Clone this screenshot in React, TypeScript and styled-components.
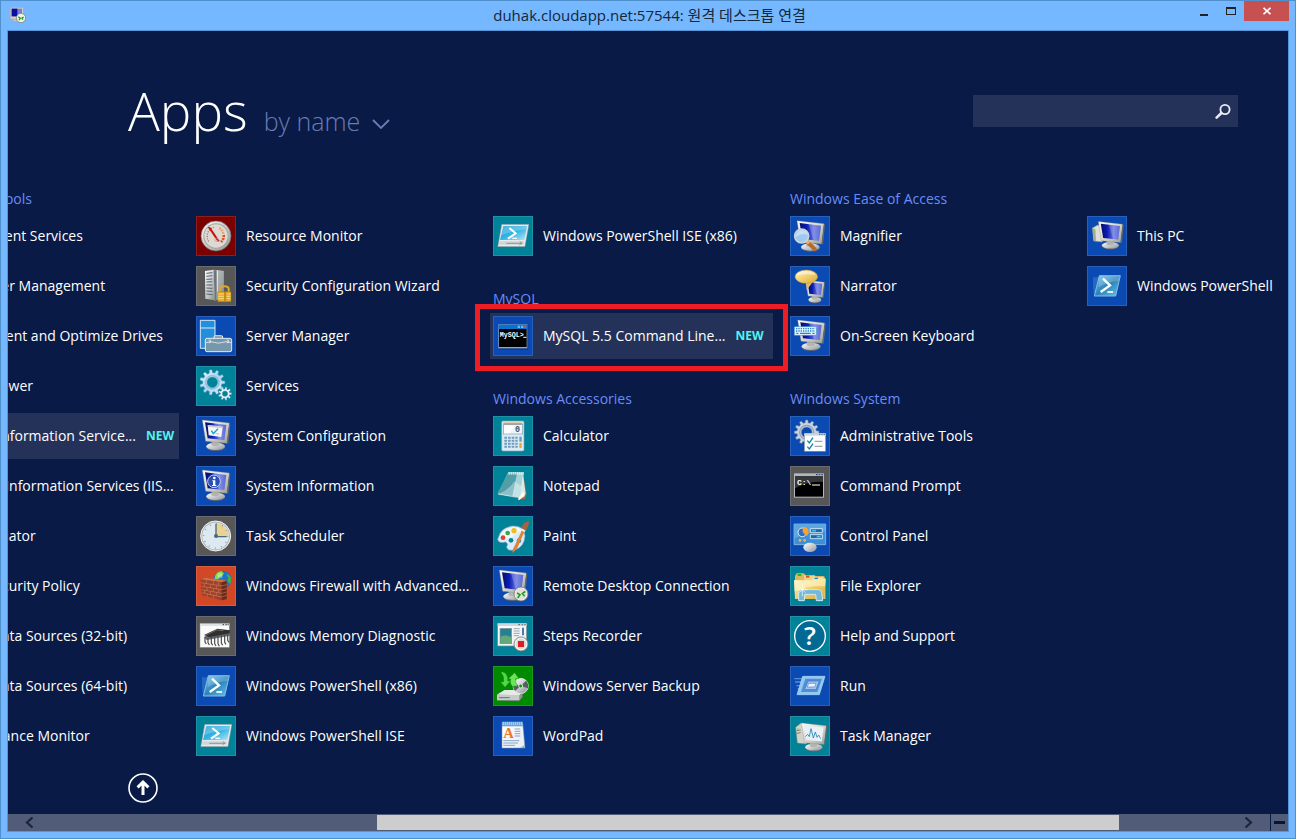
import React from "react";
import styled, { createGlobalStyle } from "styled-components";

const GlobalStyle = createGlobalStyle`
  *, *::before, *::after { box-sizing: border-box; }
  body {
    margin: 0;
    background: #75b8ff;
    font-family: "Open Sans", "Noto Sans", "Noto Sans CJK KR", sans-serif;
  }
  h1, h2, ul { margin: 0; padding: 0; }
  ul { list-style: none; }
  button, input { font: inherit; color: inherit; border: 0; padding: 0; background: none; }
`;

const color = {
  frame: "#75b8ff",
  frameLine: "#4f8fcb",
  canvas: "#081a45",
  panel: "#24325a",
  heading: "#6a8cf8",
  fresh: "#4df5f0",
  track: "#515c78",
};

const tiles = {
  red: "#7b0000",
  gray: "#575757",
  blue: "#0a4ab2",
  teal: "#008299",
  orange: "#d24726",
  green: "#008a00",
};
type TileColor = keyof typeof tiles;

/* ---------- window ---------- */

const Frame = styled.div`
  display: flex;
  flex-direction: column;
  min-height: 100vh;
  border: 1px solid ${color.frameLine};
  background: ${color.frame};
  overflow: hidden;
`;

const TitleBar = styled.header`
  display: grid;
  grid-template-columns: 1fr auto 1fr;
  height: 29px;
  padding: 0 6px 0 9px;
`;

const TitleIcon = styled.svg`
  width: 16px;
  height: 16px;
  margin-top: 6px;
`;

const TitleText = styled.span`
  font-size: 15px;
  line-height: 28px;
  color: #14263c;
  white-space: nowrap;
`;

const WindowButtons = styled.div`
  display: flex;
  justify-content: flex-end;
`;

const WindowButton = styled.button<{ $close?: boolean }>`
  display: flex;
  align-items: center;
  justify-content: center;
  width: ${(p) => (p.$close ? 45 : 27)}px;
  height: 20px;
  background: ${(p) => (p.$close ? "#c75050" : "transparent")};
`;

const Screen = styled.main`
  display: flex;
  flex: 1;
  flex-direction: column;
  min-width: 0;
  margin: 0 6px 6px;
  border: 1px solid #5795d8;
  background: ${color.canvas};
  color: #fff;
  overflow: hidden;
`;

/* ---------- header ---------- */

const AppsHeader = styled.div`
  display: flex;
  align-items: flex-start;
  justify-content: space-between;
  height: 132px;
  padding: 0 50px 0 120px;
`;

const TitleGroup = styled.div`
  display: flex;
  align-items: baseline;
  gap: 16px;
  padding-top: 42px;
`;

const PageTitle = styled.h1`
  font-size: 53px;
  font-weight: 300;
  line-height: 76px;
`;

const SortButton = styled.button`
  display: flex;
  align-items: baseline;
  gap: 12px;
  font-size: 25px;
  font-weight: 300;
  line-height: 36px;
  color: #6b7bb5;
`;

const SearchBox = styled.form`
  display: flex;
  align-items: center;
  width: 265px;
  height: 32px;
  margin-top: 64px;
  background: ${color.panel};
`;

const SearchInput = styled.input`
  flex: 1;
  min-width: 0;
  height: 32px;
  padding-left: 8px;
  font-size: 14px;
  outline: none;
`;

const SearchButton = styled.button`
  display: flex;
  align-items: center;
  justify-content: center;
  width: 30px;
  height: 32px;
`;

/* ---------- app list ---------- */

const Columns = styled.div`
  display: flex;
  gap: 14px;
  margin-left: -112px;
`;

const Column = styled.ul`
  display: flex;
  flex: 0 0 283px;
  flex-direction: column;
  gap: 4px;
  min-width: 0;
`;

const Slot = styled.li`
  height: 46px;
`;

const GroupHeading = styled.h2`
  display: flex;
  align-items: flex-end;
  height: 46px;
  padding-left: 3px;
  font-size: 14px;
  font-weight: 400;
  line-height: 20px;
  color: ${color.heading};
  white-space: nowrap;
`;

const AppButton = styled.button<{ $fresh?: boolean; $alignEnd?: boolean }>`
  position: relative;
  display: flex;
  align-items: center;
  justify-content: ${(p) => (p.$alignEnd ? "flex-end" : "flex-start")};
  gap: 10px;
  width: 100%;
  height: 46px;
  padding: 0 5px 0 3px;
  background: ${(p) => (p.$fresh ? color.panel : "transparent")};
  font-size: 14px;
  line-height: 20px;
  text-align: left;
  white-space: nowrap;
`;

const Marker = styled.span`
  position: absolute;
  inset: -9px -15px -12px;
  border: 5px solid #ee1c25;
`;

const Tile = styled.span<{ $color: TileColor }>`
  display: block;
  flex: none;
  width: 40px;
  height: 40px;
  background: ${(p) => tiles[p.$color]};
  box-shadow: inset 0 0 0 1px rgba(255, 255, 255, 0.12);
`;

const Glyph = styled.svg`
  display: block;
  width: 40px;
  height: 40px;
`;

const NewTag = styled.span`
  font-size: 12px;
  font-weight: 700;
  color: ${color.fresh};
`;

const Footer = styled.div`
  flex: 1;
  padding: 14px 0 10px 120px;
`;

const UpButton = styled.button`
  display: block;
  width: 30px;
  height: 30px;
`;

/* ---------- scroll bar ---------- */

const ScrollBar = styled.div`
  display: grid;
  grid-template-columns: 369fr 742fr 151fr 18px;
  height: 17px;
  background: ${color.track};
`;

const TrackPart = styled.div<{ $end?: boolean }>`
  display: flex;
  justify-content: ${(p) => (p.$end ? "flex-end" : "flex-start")};
  padding: 0 13px;
`;

const Thumb = styled.div`
  margin: 1px 0;
  background: #cdcdcd;
`;

const ArrowButton = styled.button`
  display: flex;
  align-items: center;
  justify-content: center;
  width: 17px;
  height: 17px;
`;

const ZoomOut = styled(ArrowButton)`
  width: 18px;
  border-left: 1px solid ${color.canvas};
`;

const Defs = styled.svg`
  display: block;
  width: 0;
  height: 0;
`;

/* ---------- icon drawings, on a 120 unit grid ---------- */

const gearPath = (cx: number, cy: number, outer: number, inner: number, teeth: number) => {
  const step = (Math.PI * 2) / teeth;
  const at = (r: number, a: number) =>
    `${(cx + r * Math.cos(a)).toFixed(1)} ${(cy + r * Math.sin(a)).toFixed(1)}`;
  let d = "";
  for (let i = 0; i < teeth; i++) {
    const a = i * step;
    d += `${i ? "L" : "M"}${at(inner, a - step * 0.3)}L${at(outer, a - step * 0.18)}L${at(
      outer,
      a + step * 0.18
    )}L${at(inner, a + step * 0.3)}`;
  }
  return d + "Z";
};

const Gradient = ({ id, stops, flat }: { id: string; stops: string[]; flat?: boolean }) => (
  <linearGradient id={id} x1="0" y1="0" x2="1" y2={flat ? "0" : "1"}>
    {stops.map((s, i) => (
      <stop key={i} offset={i / (stops.length - 1)} stopColor={s} />
    ))}
  </linearGradient>
);

const SharedDefs = () => (
  <Defs aria-hidden="true">
    <defs>
      <Gradient id="bezel" stops={["#fbfbf8", "#d9d9d2", "#9c9c94"]} />
      <Gradient id="glass" stops={["#060c68", "#0c1cb4", "#6070e0", "#2c40c8"]} flat />
      <Gradient id="metal" stops={["#ffffff", "#c8ccd0", "#8c9298"]} />
      <Gradient id="ice" stops={["#f0faff", "#a8d4ee", "#e4f4fc"]} />
      <Gradient id="shell" stops={["#74c4ec", "#2d84bd", "#6cc4e4"]} />
      <Gradient id="sky" stops={["#0c98d4", "#35b4e4", "#b4e8f4"]} />
      <Gradient id="gold" stops={["#fff4c4", "#f0d070", "#d8a830"]} />
      <Gradient id="paper" stops={["#ffffff", "#e8ecf0"]} />
    </defs>
  </Defs>
);

const Monitor = ({ at = "", fill = "url(#glass)" }: { at?: string; fill?: string }) => (
  <g transform={at}>
    <ellipse cx="59" cy="94" rx="28" ry="11" fill="#5f666c" />
    <ellipse cx="59" cy="91" rx="28" ry="11" fill="url(#metal)" />
    <path d="M48 70L46 88Q58 94 70 88L70 74Z" fill="#b4b5ae" />
    <path d="M19 12L100 21L93 82L29 76Z" fill="url(#bezel)" stroke="#84847e" strokeWidth="1" />
    <path d="M27 19L91 27L85 72L35 67Z" fill={fill} />
    <path d="M54 22L91 27L85 72L68 70Z" fill="#fff" opacity="0.22" />
    <path d="M93 82L100 21L103 24L97 83Z" fill="#686860" />
  </g>
);

const Badge = ({ x, y, r }: { x: number; y: number; r: number }) => (
  <g>
    <circle cx={x} cy={y} r={r} fill="#f2f2ee" stroke="#77776f" strokeWidth="2.5" />
    <circle cx={x} cy={y} r={r - 4} fill="#e0e0da" />
    <path
      d={`M${x - 12} ${y - 3}l9 5l-7 10M${x + 13} ${y - 8}l-9 7l7 8`}
      fill="none"
      stroke="#1c9a1c"
      strokeWidth="4.5"
    />
  </g>
);

const Shell = () => (
  <>
    <path d="M18 34H40L34 82H20L18 62Z" fill="#5aa0e0" opacity="0.35" />
    <path d="M37 29H100L86 90H22Z" fill="url(#shell)" stroke="#7fc0e0" strokeWidth="3" />
    <path d="M38 30H98L95 44Q60 48 34 64Z" fill="#fff" opacity="0.2" />
    <path d="M48 38L69 58L41 78" fill="none" stroke="#fff" strokeWidth="7" />
    <path d="M61 78H78" stroke="#fff" strokeWidth="5" />
  </>
);

const ShellIse = () => (
  <>
    <path d="M26 25H108L96 92H14Z" fill="#e6eaec" stroke="#6e7c84" strokeWidth="1.5" />
    <path d="M31 30H102L94 72H21Z" fill="url(#sky)" />
    <path d="M31 30H102L100 40Q60 44 24 58Z" fill="#fff" opacity="0.25" />
    <path d="M20 76H93L91 86H17Z" fill="#cfd4d6" />
    <path d="M40 82H88M80 76L86 81L79 87" fill="none" stroke="#70797e" strokeWidth="2" />
    <path d="M49 36L68 52L45 68" fill="none" stroke="#fff" strokeWidth="6" />
    <path d="M58 67H72" stroke="#fff" strokeWidth="4" />
  </>
);

const icons: Record<string, React.ReactNode> = {
  resource: (
    <>
      <circle cx="60" cy="60" r="45" fill="url(#metal)" stroke="#707070" strokeWidth="2" />
      <circle cx="60" cy="60" r="38" fill="#a8a49e" />
      <circle cx="60" cy="60" r="35" fill="#dedad2" />
      <path d="M38 76A28 28 0 0 1 53 34" fill="none" stroke="#77736c" strokeWidth="4" strokeDasharray="3 4" />
      <path d="M70 36A26 26 0 0 1 82 54" fill="none" stroke="#e0a060" strokeWidth="7" strokeDasharray="5 3" />
      <path d="M83 57A24 24 0 0 1 75 78" fill="none" stroke="#dd4e20" strokeWidth="8" strokeDasharray="6 3" />
      <path d="M35 33L43 34L71 75L65 77Z" fill="#c81010" />
      <circle cx="61" cy="71" r="5" fill="none" stroke="#aaa69e" strokeWidth="2" />
    </>
  ),
  security: (
    <>
      <path d="M27 15L52 11L56 103L28 98Z" fill="url(#metal)" />
      <path d="M52 11L83 15V92L56 104Z" fill="url(#bezel)" />
      <path d="M53 12L62 13V101L56 104Z" fill="#6d757b" />
      <path d="M66 14L83 16V92L66 99Z" fill="#7c868c" opacity="0.55" />
      <path d="M31 22L49 20M31 31L49 29M31 40L49 39M31 48L49 47M31 57H49M31 66L49 67M31 75L49 76M31 84L50 86" stroke="#556068" strokeWidth="3" />
      <circle cx="48" cy="95" r="3" fill="#52e030" />
      <path d="M73 79V69Q73 61 86 61Q98 61 98 69V79" fill="none" stroke="#e0a828" strokeWidth="6" />
      <rect x="65" y="77" width="40" height="30" rx="2" fill="#e3ac32" stroke="#a87010" strokeWidth="1.5" />
      <path d="M66 84H104M66 91H104M66 98H104" stroke="#fbdc80" strokeWidth="2.5" />
      <path d="M84 78H91V106H84Z" fill="#c78c18" />
    </>
  ),
  server: (
    <>
      <path d="M13 13H57V97H13Z" fill="#2490dc" stroke="#fff" strokeWidth="2.5" />
      <path d="M13 36H57" stroke="#fff" strokeWidth="2.5" />
      <path d="M54 67V63Q54 59 58 59H76Q80 59 80 63V67" fill="#7898ac" stroke="#fff" strokeWidth="2.5" />
      <rect x="28" y="67" width="79" height="40" rx="5" fill="#7798ac" stroke="#fff" strokeWidth="2.5" />
      <path d="M30 80L44 77Q67 86 91 77L105 80M38 72H43V80H38M92 72H97V80H92" fill="none" stroke="#fff" strokeWidth="2" />
    </>
  ),
  services: (
    <>
      <path
        d={gearPath(49, 49, 38, 29, 11) + "M65 49A16 16 0 1 0 33 49A16 16 0 1 0 65 49Z"}
        fill="url(#ice)"
        fillRule="evenodd"
        stroke="#4890b0"
        strokeWidth="1.5"
      />
      <circle cx="49" cy="49" r="20" fill="none" stroke="#8fbde0" strokeWidth="4" />
      <path
        d={gearPath(87, 83, 20, 14, 9) + "M95 83A8 8 0 1 0 79 83A8 8 0 1 0 95 83Z"}
        fill="#e9f6fd"
        fillRule="evenodd"
        stroke="#4890b0"
        strokeWidth="1.5"
      />
    </>
  ),
  configuration: (
    <>
      <Monitor />
      <path d="M35 27L80 32L76 63L38 58Z" fill="#f6f7f2" />
      <path d="M35 27L80 32L79 37L36 32Z" fill="#c9ccd0" />
      <path d="M46 44L52 53L66 38" fill="none" stroke="#18a0d8" strokeWidth="4.5" />
      <path d="M58 53L70 54" stroke="#a0a4a8" strokeWidth="2" />
    </>
  ),
  information: (
    <>
      <Monitor />
      <circle cx="54" cy="46" r="19" fill="#2850b8" stroke="#c8d4f0" strokeWidth="3" />
      <circle cx="55" cy="36" r="4" fill="#fff" />
      <path d="M49 43H58V57H61V60H48V57H51V46H49Z" fill="#fff" />
    </>
  ),
  scheduler: (
    <>
      <circle cx="59" cy="60" r="45" fill="#b4b8ba" stroke="#f4f4f4" strokeWidth="3" />
      <circle cx="59" cy="60" r="40" fill="#dde9f0" />
      <path d="M60 60V22A38 38 0 0 1 97 60Z" fill="#ead291" />
      <circle cx="59" cy="60" r="36" fill="none" stroke="#7c8a94" strokeWidth="5" strokeDasharray="2 16.85" />
      <path d="M60 23V62H92" fill="none" stroke="#4b6880" strokeWidth="4" />
      <circle cx="60" cy="60" r="6" fill="#49677e" />
    </>
  ),
  firewall: (
    <>
      <circle cx="80" cy="41" r="27" fill="#1b73cc" />
      <path d="M58 28Q64 16 76 15L84 22L78 30L70 34L64 46L55 42Z" fill="#84d850" />
      <path d="M90 22L103 30Q108 42 103 54L94 46L97 36Z" fill="#4cae38" />
      <path d="M76 40L90 44L93 56L84 66L78 58Z" fill="#68c048" />
      <circle cx="72" cy="29" r="8" fill="#fff" opacity="0.35" />
      <path d="M14 40L28 35L92 44V99L76 103L18 87Z" fill="#a34027" />
      <path d="M14 40L77 48V103L18 87Z" fill="#a04026" />
      <path d="M77 48L92 44V99L77 103Z" fill="#6a2a1a" />
      <path d="M15 50L77 60L92 56M16 61L77 71L92 67M17 71L77 82L92 78M17 80L77 93L92 88M31 42V52M52 45V56M67 47V58M25 52V62M43 56V66M61 58V69M33 65V74M52 67V78M68 70V80M26 73V82M43 76V87M61 79V90M34 84V92M53 87V97" fill="none" stroke="#d08c70" strokeWidth="1.5" />
      <path d="M14 40L28 35L92 44L77 48Z" fill="#cb7350" />
    </>
  ),
  memory: (
    <>
      <rect x="12" y="23" width="88" height="71" fill="#fbfbfb" stroke="#898f92" strokeWidth="1.5" />
      <path d="M12 23H100V30H12Z" fill="#dce2e5" />
      <path d="M80 26H84M88 26H92M95 26H98" stroke="#333" strokeWidth="3" />
      <path d="M24 63L64 43L102 47L102 59L32 72Z" fill="#6a6a6a" />
      <path d="M24 57L64 38L102 43L101 52L40 64Z" fill="#303030" />
      <path d="M27 63V78L31 84M36 65V80L40 87M46 63V81L50 88M56 62V83L60 90M66 60V83L70 91M76 58V81L80 88M86 56V79L90 85M95 55V73L99 79" fill="none" stroke="#45494c" strokeWidth="3.5" />
      <path d="M28 58L62 42L82 44" fill="none" stroke="#858585" strokeWidth="2" />
    </>
  ),
  shell: <Shell />,
  ise: <ShellIse />,
  mysql: (
    <>
      <path d="M19 28H106V101H19Z" fill="#001c58" opacity="0.45" />
      <path d="M16 25H103V97H16Z" fill="#93a9c0" />
      <path d="M17 26H102V39H17Z" fill="#0c71cc" />
      <path d="M74 29H81V36H74ZM84 29H91V36H84Z" fill="#70b7f0" />
      <path d="M94 29H100V36H94Z" fill="#e05230" />
      <path d="M18 39H101V93H18Z" fill="#000" />
      <text x="20" y="63" fill="#fff" fontFamily="Liberation Mono, monospace" fontSize="20" fontWeight="700">
        MySQL&gt;
      </text>
      <path d="M91 64H100" stroke="#fff" strokeWidth="3" />
    </>
  ),
  calculator: (
    <>
      <rect x="26" y="15" width="67" height="90" rx="4" fill="#dcecf5" stroke="#7ba3b4" strokeWidth="2" />
      <path d="M31 20H88V27H31Z" fill="#ee9840" />
      <rect x="31" y="26" width="58" height="28" fill="#edf4fa" stroke="#7c9fb8" strokeWidth="2" />
      <path d="M33 29H65L49 52H33Z" fill="#fff" />
      <text x="66" y="49" fill="#425568" fontFamily="Liberation Mono, monospace" fontSize="25" fontWeight="700">
        0
      </text>
      {[62, 71, 80, 89].map((y) => (
        <path key={y} d={`M34 ${y + 3}H74`} stroke="#719abf" strokeWidth="6" strokeDasharray="8 3" />
      ))}
      <path d="M79 62H86V77H79Z" fill="#719abf" />
      <path d="M79 81H86V96H79Z" fill="#f0a42c" />
    </>
  ),
  notepad: (
    <>
      <path d="M90 23L101 83L96 99L76 101Z" fill="#9b7348" />
      <path d="M90 22L98 84L76 103Z" fill="#dde8e5" />
      <path d="M46 20H90L83 94L16 85Z" fill="#a4d3d8" stroke="#e4f4f4" strokeWidth="1.5" />
      <path d="M13 82L45 22H72L58 90Z" fill="#4f9ea8" />
      <path d="M16 84Q50 70 64 46L86 61L83 98L50 92Z" fill="#fff" opacity="0.35" />
      <path d="M47 22H92" stroke="#f4f5ee" strokeWidth="8" strokeDasharray="3 3" />
      <path d="M77 96L92 76L95 90L77 103Z" fill="#fff" />
    </>
  ),
  paint: (
    <>
      <path d="M17 62Q23 36 57 30Q94 27 96 60Q94 92 67 101Q42 107 41 92Q48 82 37 78Q17 84 14 70Z" fill="#dbeafd" stroke="#7ca3b5" strokeWidth="2" />
      <path d="M20 63Q31 36 61 34Q82 33 90 45Q71 47 61 59Q45 75 20 63Z" fill="#fff" opacity="0.6" />
      <circle cx="54" cy="73" r="7" fill="#008299" />
      <circle cx="30" cy="65" r="7" fill="#e0402c" />
      <circle cx="44" cy="51" r="7" fill="#3ba83c" />
      <circle cx="63" cy="44" r="8" fill="#eebc23" />
      <circle cx="78" cy="74" r="7" fill="#318bdb" />
      <path d="M89 38L96 43L73 96Q65 107 58 110Q59 97 65 89Z" fill="#e08332" />
      <path d="M87 37L98 43L94 49L84 43Z" fill="#ecebd7" />
      <path d="M85 35Q85 23 108 14Q107 36 98 43Z" fill="#a5643f" />
    </>
  ),
  remote: (
    <>
      <Monitor />
      <Badge x={84} y={84} r={21} />
    </>
  ),
  steps: (
    <>
      <rect x="14" y="22" width="87" height="68" fill="url(#paper)" stroke="#7c8a90" strokeWidth="2" />
      <path d="M14 22H101V30H14Z" fill="#cbd8dd" />
      <path d="M76 26H81M86 26H90M94 26H98" stroke="#52606a" strokeWidth="3" />
      <rect x="21" y="37" width="35" height="46" fill="#258094" stroke="#88989c" strokeWidth="2" />
      <path d="M22 62Q38 54 55 64V82H22Z" fill="#65a878" />
      <path d="M62 38H80M62 45H80M62 52H80M62 59H78" stroke="#9ba6ac" strokeWidth="3" />
      <path d="M87 35H93V58H87Z" fill="#467baa" />
      <circle cx="84" cy="84" r="21" fill="#f4f4f0" stroke="#77776f" strokeWidth="2.5" />
      <circle cx="84" cy="84" r="16" fill="#d9d9d5" />
      <path d="M75 75H93V93H75Z" fill="#df1b24" />
    </>
  ),
  backup: (
    <>
      <path d="M11 83L31 75H88L89 94L78 106L12 103Z" fill="#60686a" />
      <path d="M12 86L34 72H86L80 88Z" fill="#e6eae6" />
      <path d="M12 87H80V103H12Z" fill="#c6ccc8" />
      <path d="M80 88L88 74V92L80 103Z" fill="#8e9692" />
      <path d="M18 95H50" stroke="#6c7470" strokeWidth="3" />
      <circle cx="83" cy="60" r="23" fill="url(#metal)" stroke="#f0f0f0" strokeWidth="2" />
      <path d="M83 60L99 44Q108 54 105 67ZM83 60L66 75Q59 66 61 54Z" fill="#555e60" />
      <circle cx="83" cy="60" r="6" fill="#179115" stroke="#d5dcd5" strokeWidth="3" />
      <path d="M28 17Q46 22 44 45L53 44L36 64L23 48L32 47Q34 29 24 20Z" fill="#51d944" stroke="#198b18" strokeWidth="1.5" />
      <path d="M59 61Q49 54 53 39L46 38L65 20L78 38L68 38Q66 52 75 60Z" fill="#67e852" stroke="#198b18" strokeWidth="1.5" />
    </>
  ),
  wordpad: (
    <>
      <path d="M27 20H89L96 96H27Z" fill="url(#paper)" stroke="#7694c0" strokeWidth="1.5" />
      <path d="M27 17H89V31H27Z" fill="#6ba5d8" />
      <path d="M31 18V27M37 18V27M43 18V27M49 18V27M55 18V27M61 18V27M67 18V27M73 18V27M79 18V27M85 18V27" stroke="#d4e8f8" strokeWidth="2" />
      <text x="31" y="67" fill="#ed782b" fontFamily="Liberation Serif, serif" fontSize="44" fontWeight="700">
        A
      </text>
      <path d="M65 39H82M65 46H82M65 53H82M65 60H82M31 74H79M31 81H75M31 88H66" stroke="#7194bf" strokeWidth="2.5" />
      <path d="M82 95L96 86V96Z" fill="#9bacbf" />
    </>
  ),
  magnifier: (
    <>
      <Monitor at="translate(2 2)" />
      <path d="M50 76L75 100" stroke="#b76b2a" strokeWidth="11" strokeLinecap="round" />
      <path d="M49 74L57 82" stroke="#d8b080" strokeWidth="10" />
      <circle cx="35" cy="60" r="21" fill="#9fc9f0" stroke="#cbd3dc" strokeWidth="5" />
      <path d="M17 59Q23 42 37 42Q50 43 53 56Q36 49 17 64Z" fill="#fff" opacity="0.4" />
    </>
  ),
  narrator: (
    <>
      <Monitor at="translate(34 33) scale(.69 .75)" />
      <path d="M48 44L50 72L68 48Z" fill="#e4bc60" />
      <ellipse cx="49" cy="32" rx="34" ry="20" fill="url(#gold)" stroke="#be963d" strokeWidth="1.5" />
      <path d="M20 29Q25 15 48 15Q70 15 77 27Q47 22 20 29Z" fill="#fff" opacity="0.5" />
    </>
  ),
  keyboard: (
    <>
      <Monitor at="translate(4 0)" />
      <rect x="13" y="32" width="66" height="26" rx="2" fill="#e8f6ff" stroke="#4c96ca" strokeWidth="2" />
      <path d="M18 38H75M18 45H75" stroke="#2686c8" strokeWidth="4" strokeDasharray="4 3" />
      <path d="M19 52H25M30 52H62M67 52H74" stroke="#2686c8" strokeWidth="4" />
    </>
  ),
  admin: (
    <>
      <path
        d={gearPath(50, 49, 37, 29, 12) + "M66 49A16 16 0 1 0 34 49A16 16 0 1 0 66 49Z"}
        fill="#c9d3df"
        fillRule="evenodd"
        stroke="#7084a0"
        strokeWidth="1.5"
      />
      <circle cx="50" cy="49" r="21" fill="none" stroke="#8ca2bc" strokeWidth="4" />
      <rect x="43" y="52" width="64" height="54" fill="#fafcfd" stroke="#6f8190" strokeWidth="1.5" />
      <path d="M43 52H107V59H43Z" fill="#cbd8e3" />
      <path d="M87 55H91M94 55H98M101 55H105" stroke="#526270" strokeWidth="3" />
      <path d="M52 74L58 81L69 65M52 92L58 99L69 83" fill="none" stroke="#1b84a2" strokeWidth="4" />
      <path d="M74 76H97M74 91H97" stroke="#718086" strokeWidth="2.5" />
    </>
  ),
  command: (
    <>
      <path d="M12 22H102V95H12Z" fill="#b4b7b9" />
      <path d="M15 31H99V92H15Z" fill="#000" />
      <path d="M15 31H99V48Q56 44 15 67Z" fill="#34383b" />
      <path d="M78 26H83M86 26H91M94 26H99" stroke="#345078" strokeWidth="4" />
      <text x="21" y="57" fill="#fff" fontFamily="Liberation Mono, monospace" fontSize="24" fontWeight="700">
        C:\
      </text>
      <path d="M66 57H90" stroke="#fff" strokeWidth="3" />
    </>
  ),
  panel: (
    <>
      <path d="M12 24H107V86H12Z" fill="#3d8fd8" stroke="#a4d1ef" strokeWidth="2" />
      <path d="M14 26H105V46Q64 43 14 67Z" fill="#8bc8ef" opacity="0.4" />
      <circle cx="37" cy="49" r="13" fill="#2e6ebd" stroke="#d7edf9" strokeWidth="3" />
      <path d="M38 48V34A14 14 0 0 1 48 60Z" fill="#f5a334" />
      <path d="M61 38H97V50H61ZM61 56H97V68H61Z" fill="#2466ad" stroke="#e0f4fb" strokeWidth="2.5" />
      <path d="M65 44H78M80 62H92" stroke="#45bde9" strokeWidth="5" />
      <circle cx="30" cy="73" r="4" fill="#f3b545" />
      <circle cx="44" cy="73" r="4" fill="#f3b545" />
      <ellipse cx="60" cy="94" rx="20" ry="14" fill="url(#metal)" />
    </>
  ),
  explorer: (
    <>
      <path d="M15 30L20 22H42L48 30H103V98H15Z" fill="#dbb85d" />
      <path d="M23 24H34V30H23Z" fill="#29b334" />
      <path d="M42 28H74L79 35H106V99H42Z" fill="#edd383" />
      <path d="M48 29H58V35H48Z" fill="#e64b28" />
      <path d="M69 34H98L104 43V90H69Z" fill="#f7e6a9" />
      <path d="M73 35H84V41H73Z" fill="#2886de" />
      <path d="M12 43H67L72 40H107L103 99H15Z" fill="url(#gold)" />
      <path d="M12 43H67L72 40H107L105 61Q57 57 14 76Z" fill="#fff7cf" opacity="0.6" />
      <path d="M26 104V79Q26 71 34 71H85Q94 71 95 79L98 104H79L77 85H44L43 104Z" fill="#75b7d6" stroke="#cceaf2" strokeWidth="3" />
      <path d="M37 56V91M22 71H53M28 62L46 80M46 62L28 80" stroke="#fff" strokeWidth="2" />
    </>
  ),
  help: (
    <>
      <circle cx="60" cy="60" r="46" fill="#006a95" stroke="#fff" strokeWidth="4" />
      <text x="60" y="88" fill="#fff" textAnchor="middle" fontFamily="Open Sans, sans-serif" fontSize="78" fontWeight="600">
        ?
      </text>
    </>
  ),
  run: (
    <>
      <path d="M13 38H43M15 48H40M19 59H36M23 69H36" stroke="#78b5ee" strokeWidth="4" opacity="0.65" />
      <path d="M38 31H105L88 86H21Z" fill="#93c8ef" stroke="#b4dcf8" strokeWidth="2" />
      <path d="M46 38H96L82 78H33Z" fill="#4b90db" />
      <path d="M54 45H88L78 71H43Z" fill="#a2c5ed" stroke="#4f7fcf" strokeWidth="3" />
      <path d="M56 52H78L74 63H52Z" fill="#edf4ff" stroke="#4f7fcf" strokeWidth="2" />
    </>
  ),
  task: (
    <>
      <path d="M17 34L33 21L50 25V84L22 81Z" fill="#d2d4cb" stroke="#82857e" strokeWidth="1.5" />
      <path d="M20 44L32 42M20 52L32 50" stroke="#7b8078" strokeWidth="3" />
      <circle cx="24" cy="39" r="2" fill="#35d420" />
      <Monitor at="translate(17 10) scale(.92)" fill="#e6eff5" />
      <path d="M46 62L53 55L58 62L63 38L70 66L76 48L81 64L86 57L92 68" fill="none" stroke="#2582bc" strokeWidth="2.5" />
    </>
  ),
  pc: (
    <>
      <path d="M16 36L32 27L46 31V78L20 75Z" fill="#dfdfd6" stroke="#888a80" strokeWidth="1.5" />
      <path d="M17 37L25 40L27 76L20 75Z" fill="#a5a69d" />
      <circle cx="22" cy="43" r="2.5" fill="#77e03c" />
      <Monitor at="translate(17 6) scale(.9)" />
    </>
  ),
};

/* ---------- data ---------- */

type AppFlags = { fresh?: boolean; marked?: boolean; alignEnd?: boolean };

type Entry =
  | { kind: "blank" }
  | { kind: "heading"; label: string }
  | ({ kind: "app"; label: string; icon: string; tile: TileColor } & AppFlags);

const blank: Entry = { kind: "blank" };
const heading = (label: string): Entry => ({ kind: "heading", label });
const app = (label: string, icon: string, tile: TileColor, flags: AppFlags = {}): Entry => ({
  kind: "app",
  label,
  icon,
  tile,
  ...flags,
});

const columns: Entry[][] = [
  [
    heading("Administrative Tools"),
    app("Component Services", "services", "teal"),
    app("Computer Management", "pc", "blue"),
    app("Defragment and Optimize Drives", "backup", "teal"),
    app("Event Viewer", "steps", "teal"),
    app("Internet Information Service...", "server", "blue", { fresh: true, alignEnd: true }),
    app("Internet Information Services (IIS...", "server", "blue"),
    app("iSCSI Initiator", "services", "teal"),
    app("Local Security Policy", "security", "gray"),
    app("ODBC Data Sources (32-bit)", "panel", "blue"),
    app("ODBC Data Sources (64-bit)", "panel", "blue"),
    app("Performance Monitor", "resource", "red"),
  ],
  [
    blank,
    app("Resource Monitor", "resource", "red"),
    app("Security Configuration Wizard", "security", "gray"),
    app("Server Manager", "server", "blue"),
    app("Services", "services", "teal"),
    app("System Configuration", "configuration", "blue"),
    app("System Information", "information", "blue"),
    app("Task Scheduler", "scheduler", "gray"),
    app("Windows Firewall with Advanced...", "firewall", "orange"),
    app("Windows Memory Diagnostic", "memory", "gray"),
    app("Windows PowerShell (x86)", "shell", "blue"),
    app("Windows PowerShell ISE", "ise", "teal"),
  ],
  [
    blank,
    app("Windows PowerShell ISE (x86)", "ise", "teal"),
    heading("MySQL"),
    app("MySQL 5.5 Command Line...", "mysql", "blue", { fresh: true, marked: true }),
    heading("Windows Accessories"),
    app("Calculator", "calculator", "teal"),
    app("Notepad", "notepad", "teal"),
    app("Paint", "paint", "teal"),
    app("Remote Desktop Connection", "remote", "blue"),
    app("Steps Recorder", "steps", "teal"),
    app("Windows Server Backup", "backup", "green"),
    app("WordPad", "wordpad", "blue"),
  ],
  [
    heading("Windows Ease of Access"),
    app("Magnifier", "magnifier", "blue"),
    app("Narrator", "narrator", "blue"),
    app("On-Screen Keyboard", "keyboard", "blue"),
    heading("Windows System"),
    app("Administrative Tools", "admin", "blue"),
    app("Command Prompt", "command", "gray"),
    app("Control Panel", "panel", "blue"),
    app("File Explorer", "explorer", "teal"),
    app("Help and Support", "help", "teal"),
    app("Run", "run", "blue"),
    app("Task Manager", "task", "teal"),
  ],
  [blank, app("This PC", "pc", "blue"), app("Windows PowerShell", "shell", "blue")],
];

const EntryView = ({ entry }: { entry: Entry }) => {
  if (entry.kind === "blank") return <Slot aria-hidden="true" />;
  if (entry.kind === "heading")
    return (
      <Slot>
        <GroupHeading>{entry.label}</GroupHeading>
      </Slot>
    );
  return (
    <Slot>
      <AppButton type="button" $fresh={entry.fresh} $alignEnd={entry.alignEnd}>
        <Tile $color={entry.tile}>
          <Glyph viewBox="0 0 120 120" aria-hidden="true">
            {icons[entry.icon]}
          </Glyph>
        </Tile>
        <span>{entry.label}</span>
        {entry.fresh && <NewTag>NEW</NewTag>}
        {entry.marked && <Marker />}
      </AppButton>
    </Slot>
  );
};

export default function App() {
  return (
    <>
      <GlobalStyle />
      <Frame>
        <SharedDefs />
        <TitleBar>
          <TitleIcon viewBox="0 0 48 48" aria-hidden="true">
            <path d="M12 34H28L30 42H8Z" fill="#c9c2b4" />
            <path d="M1 1H40V36H1Z" fill="#d8d1c5" stroke="#a49b8c" strokeWidth="1.5" />
            <path d="M5 5H36V28H5Z" fill="#7080d8" />
            <path d="M5 5H22V28H5Z" fill="#0a0ea0" />
            <circle cx="33" cy="33" r="14" fill="#f2f2ec" stroke="#6f6f68" strokeWidth="2" />
            <path d="M25 29L31 34L27 39M41 30L36 33L39 38" fill="none" stroke="#18a018" strokeWidth="4" />
          </TitleIcon>
          <TitleText>duhak.cloudapp.net:57544: 원격 데스크톱 연결</TitleText>
          <WindowButtons>
            <WindowButton type="button" aria-label="Minimize">
              <svg width="10" height="12" viewBox="0 0 10 12">
                <path d="M1 9H9V11H1Z" fill="#222" />
              </svg>
            </WindowButton>
            <WindowButton type="button" aria-label="Maximize">
              <svg width="10" height="8" viewBox="0 0 10 8" shapeRendering="crispEdges">
                <path d="M0 0H10V8H0ZM1 2V7H9V2Z" fill="#222" fillRule="evenodd" />
              </svg>
            </WindowButton>
            <WindowButton type="button" aria-label="Close" $close>
              <svg width="8" height="8" viewBox="0 0 8 8">
                <path d="M0.5 0.8L7.5 7.2M7.5 0.8L0.5 7.2" stroke="#fff" strokeWidth="1.8" />
              </svg>
            </WindowButton>
          </WindowButtons>
        </TitleBar>
        <Screen>
          <AppsHeader>
            <TitleGroup>
              <PageTitle>Apps</PageTitle>
              <SortButton type="button">
                by name
                <svg width="18" height="12" viewBox="0 0 18 12" aria-hidden="true">
                  <path d="M1 1L9 9L17 1" fill="none" stroke="currentColor" strokeWidth="1.8" />
                </svg>
              </SortButton>
            </TitleGroup>
            <SearchBox role="search">
              <SearchInput type="text" aria-label="Search apps" />
              <SearchButton type="button" aria-label="Search">
                <svg width="16" height="16" viewBox="0 0 16 16">
                  <circle cx="10" cy="6.5" r="4.6" fill="none" stroke="#e8ebf2" strokeWidth="1.8" />
                  <path d="M6.4 10L1.6 14.6" stroke="#e8ebf2" strokeWidth="2.6" strokeLinecap="round" />
                </svg>
              </SearchButton>
            </SearchBox>
          </AppsHeader>
          <Columns>
            {columns.map((entries, i) => (
              <Column key={i}>
                {entries.map((entry, j) => (
                  <EntryView key={j} entry={entry} />
                ))}
              </Column>
            ))}
          </Columns>
          <Footer>
            <UpButton type="button" aria-label="Back to Start">
              <svg width="30" height="30" viewBox="0 0 30 30">
                <circle cx="15" cy="15" r="14" fill="none" stroke="#fff" strokeWidth="1.6" />
                <path d="M15 22V9M9.6 14.4L15 9L20.4 14.4" fill="none" stroke="#fff" strokeWidth="3" />
              </svg>
            </UpButton>
          </Footer>
          <ScrollBar>
            <TrackPart>
              <ArrowButton type="button" aria-label="Scroll left">
                <svg width="9" height="11" viewBox="0 0 9 11">
                  <path d="M7.5 0.5L2 5.5L7.5 10.5" fill="none" stroke="#1c2438" strokeWidth="2.2" />
                </svg>
              </ArrowButton>
            </TrackPart>
            <Thumb />
            <TrackPart $end>
              <ArrowButton type="button" aria-label="Scroll right">
                <svg width="9" height="11" viewBox="0 0 9 11">
                  <path d="M1.5 0.5L7 5.5L1.5 10.5" fill="none" stroke="#1c2438" strokeWidth="2.2" />
                </svg>
              </ArrowButton>
            </TrackPart>
            <ZoomOut type="button" aria-label="Zoom out">
              <svg width="11" height="3" viewBox="0 0 11 3">
                <path d="M0 0H11V3H0Z" fill="#0c1530" />
              </svg>
            </ZoomOut>
          </ScrollBar>
        </Screen>
      </Frame>
    </>
  );
}
